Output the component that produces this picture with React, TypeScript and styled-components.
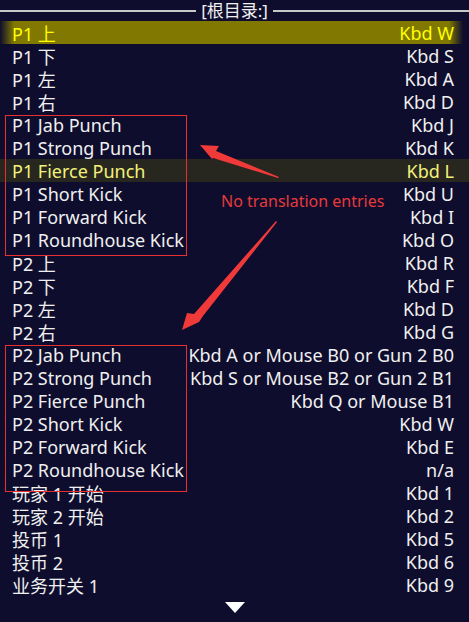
import React from "react";
import styled, { createGlobalStyle } from "styled-components";

const GlobalStyle = createGlobalStyle`
  html, body {
    margin: 0;
    padding: 0;
    background: #0e0d2d;
  }
  body {
    font-family: "Noto Sans", "Noto Sans CJK SC", sans-serif;
  }
`;

type Entry = { name: string; input: string };

const ENTRIES: Entry[] = [
	{ name: "P1 上", input: "Kbd W" },
	{ name: "P1 下", input: "Kbd S" },
	{ name: "P1 左", input: "Kbd A" },
	{ name: "P1 右", input: "Kbd D" },
	{ name: "P1 Jab Punch", input: "Kbd J" },
	{ name: "P1 Strong Punch", input: "Kbd K" },
	{ name: "P1 Fierce Punch", input: "Kbd L" },
	{ name: "P1 Short Kick", input: "Kbd U" },
	{ name: "P1 Forward Kick", input: "Kbd I" },
	{ name: "P1 Roundhouse Kick", input: "Kbd O" },
	{ name: "P2 上", input: "Kbd R" },
	{ name: "P2 下", input: "Kbd F" },
	{ name: "P2 左", input: "Kbd D" },
	{ name: "P2 右", input: "Kbd G" },
	{ name: "P2 Jab Punch", input: "Kbd A or Mouse B0 or Gun 2 B0" },
	{ name: "P2 Strong Punch", input: "Kbd S or Mouse B2 or Gun 2 B1" },
	{ name: "P2 Fierce Punch", input: "Kbd Q or Mouse B1" },
	{ name: "P2 Short Kick", input: "Kbd W" },
	{ name: "P2 Forward Kick", input: "Kbd E" },
	{ name: "P2 Roundhouse Kick", input: "n/a" },
	{ name: "玩家 1 开始", input: "Kbd 1" },
	{ name: "玩家 2 开始", input: "Kbd 2" },
	{ name: "投币 1", input: "Kbd 5" },
	{ name: "投币 2", input: "Kbd 6" },
	{ name: "业务开关 1", input: "Kbd 9" },
];

const SELECTED = 0;
const HOVERED = 6;

export default function App() {
	return (
		<>
			<GlobalStyle />
			<Screen>
				<Header>
					<Rule />
					<Title>[根目录:]</Title>
					<Rule />
				</Header>
				<List>
					{ENTRIES.map((entry, i) => (
						<Row
							key={entry.name}
							$state={i === SELECTED ? "selected" : i === HOVERED ? "hover" : "normal"}
						>
							<Name>{entry.name}</Name>
							<Input>{entry.input}</Input>
						</Row>
					))}
				</List>
				<Footer>
					<MoreArrow />
				</Footer>

				{/* annotation overlay */}
				<NoteBox style={{ top: 115, height: 139 }} />
				<NoteBox style={{ top: 345, height: 145 }} />
				<NoteLabel>No translation entries</NoteLabel>
				<Arrows viewBox="0 0 469 622" width={469} height={622}>
					<polygon points="278,178 213,158 212,159 200,145 219,146 216,151 279,177" />
					<polygon points="277,222 203,316 199,322 182,330 187,313 194,314 276,221" />
				</Arrows>
			</Screen>
		</>
	);
}

const Screen = styled.div`
  position: relative;
  width: 469px;
  height: 622px;
  overflow: hidden;
  background: #0e0d2d;
  color: #f0f0f0;
`;

const Header = styled.div`
  display: flex;
  align-items: center;
  height: 21px;
  gap: 5px;
`;

const Rule = styled.div`
  flex: 1;
  height: 2px;
  background: #c8c8c8;
`;

const Title = styled.span`
  font-size: 17px;
  line-height: 21px;
  color: #f0f0f0;
`;

const List = styled.div`
  display: flex;
  flex-direction: column;
`;

const Row = styled.div<{ $state: "selected" | "hover" | "normal" }>`
  display: flex;
  justify-content: space-between;
  align-items: center;
  height: 23px;
  padding: 0 15px 0 12px;
  font-size: 18px;
  white-space: nowrap;
  color: ${(p) =>
		p.$state === "selected" ? "#ffff00" : p.$state === "hover" ? "#f2f27a" : "#f0f0f0"};
  background: ${(p) =>
		p.$state === "selected"
			? "linear-gradient(to right, rgba(128,120,0,0) 0, #807800 14px, #807800 calc(100% - 20px), rgba(128,120,0,0) calc(100% - 6px))"
			: p.$state === "hover"
				? "#28271f"
				: "transparent"};
`;

const Name = styled.span``;

const Input = styled.span``;

const Footer = styled.div`
  display: flex;
  justify-content: center;
  padding-top: 6px;
`;

const MoreArrow = styled.div`
  width: 0;
  height: 0;
  border-left: 10px solid transparent;
  border-right: 10px solid transparent;
  border-top: 11px solid #ffffff;
`;

const NoteBox = styled.div`
  position: absolute;
  left: 5px;
  width: 180px;
  border: 1px solid #e82e2e;
`;

const NoteLabel = styled.div`
  position: absolute;
  left: 221px;
  top: 191px;
  font-size: 16px;
  line-height: 20px;
  color: #e63a3a;
`;

const Arrows = styled.svg`
  position: absolute;
  left: 0;
  top: 0;
  pointer-events: none;
  fill: #f03a3a;
`;
